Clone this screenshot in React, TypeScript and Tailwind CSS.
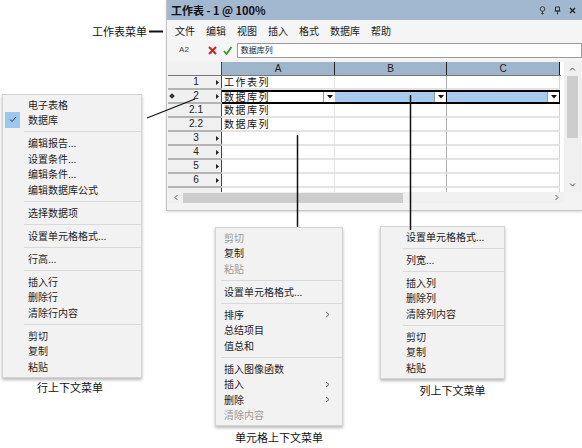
import React from "react";

type Item = { t: string; d?: boolean; sub?: boolean; checked?: boolean } | "sep";

const FONT = { fontFamily: '"Noto Sans CJK SC", "Noto Sans", sans-serif' };
const LAT = { fontFamily: '"Liberation Sans", "Noto Sans CJK SC", sans-serif' };

function Menu({
  items,
  textPad,
  sepPad,
  className,
}: {
  items: Item[];
  textPad: string;
  sepPad: string;
  className: string;
}) {
  return (
    <div
      className={`absolute bg-[#f2f2f2] border border-[#d4d4d4] shadow-[0_2px_3px_rgba(0,0,0,0.28)] py-[2px] ${className}`}
      style={FONT}
    >
      {items.map((it, i) =>
        it === "sep" ? (
          <div key={i} className={`h-[7.5px] flex items-center ${sepPad}`}>
            <div className="h-px w-full bg-[#d9d9d9]" />
          </div>
        ) : (
          <div key={i} className={`relative h-[15.5px] flex items-center ${textPad} pr-[12px] text-[10px] leading-none ${it.d ? "text-[#9a9a9a]" : "text-[#1e1e1e]"}`}>
            {it.checked && (
              <div className="absolute left-[2px] top-[-1px] w-[15px] h-[16px] bg-[#99c9ef] flex items-center justify-center">
                <svg width="8" height="7" viewBox="0 0 8 7">
                  <path d="M1 3.5 L3 5.5 L7 1" stroke="#333" strokeWidth="1" fill="none" />
                </svg>
              </div>
            )}
            <span className="flex-1">{it.t}</span>
            {it.sub && (
              <svg width="5" height="7" viewBox="0 0 5 7">
                <path d="M1 1 L4 3.5 L1 6" stroke="#555" strokeWidth="0.9" fill="none" />
              </svg>
            )}
          </div>
        )
      )}
    </div>
  );
}

const leftItems: Item[] = [
  { t: "电子表格" },
  { t: "数据库", checked: true },
  "sep",
  { t: "编辑报告..." },
  { t: "设置条件..." },
  { t: "编辑条件..." },
  { t: "编辑数据库公式" },
  "sep",
  { t: "选择数据项" },
  "sep",
  { t: "设置单元格格式..." },
  "sep",
  { t: "行高..." },
  "sep",
  { t: "插入行" },
  { t: "删除行" },
  { t: "清除行内容" },
  "sep",
  { t: "剪切" },
  { t: "复制" },
  { t: "粘贴" },
];

const midItems: Item[] = [
  { t: "剪切", d: true },
  { t: "复制" },
  { t: "粘贴", d: true },
  "sep",
  { t: "设置单元格格式..." },
  "sep",
  { t: "排序", sub: true },
  { t: "总结项目" },
  { t: "值总和" },
  "sep",
  { t: "插入图像函数" },
  { t: "插入", sub: true },
  { t: "删除", sub: true },
  { t: "清除内容", d: true },
];

const rightItems: Item[] = [
  { t: "设置单元格格式..." },
  "sep",
  { t: "列宽..." },
  "sep",
  { t: "插入列" },
  { t: "删除列" },
  { t: "清除列内容" },
  "sep",
  { t: "剪切" },
  { t: "复制" },
  { t: "粘贴" },
];

function Arrow() {
  return (
    <svg width="3" height="5" viewBox="0 0 3 5">
      <path d="M0 0 L3 2.5 L0 5 Z" fill="#222" />
    </svg>
  );
}

function DropBox() {
  return (
    <div className="w-[12px] h-full bg-white border-l border-[#999] flex items-center justify-center">
      <svg width="6" height="4" viewBox="0 0 6 4">
        <path d="M0 0 L6 0 L3 3.5 Z" fill="#111" />
      </svg>
    </div>
  );
}

type Row = { h: string; arrow: boolean; a?: string; sel?: boolean; diamond?: boolean };
const rows: Row[] = [
  { h: "1", arrow: true, a: "工作表列" },
  { h: "2", arrow: true, a: "数据库列", sel: true, diamond: true },
  { h: "2.1", arrow: false, a: "数据库列" },
  { h: "2.2", arrow: false, a: "数据库列" },
  { h: "3", arrow: true },
  { h: "4", arrow: true },
  { h: "5", arrow: true },
  { h: "6", arrow: true },
];

function RowHeader({ r }: { r: Row }) {
  return (
    <div className="w-[54px] h-full flex items-center bg-[#f0f0f0] border-r border-[#444] text-[10px] text-[#222]" style={LAT}>
      <div className="w-[8px] flex items-center justify-center">
        {r.diamond && <div className="w-[4px] h-[4px] bg-[#333] rotate-45" />}
      </div>
      <div className="w-[40px] text-center leading-none">{r.h}</div>
      <div className="w-[5px] flex items-center">{r.arrow && <Arrow />}</div>
    </div>
  );
}

function Window() {
  return (
    <div className="absolute left-[166px] top-0 w-[416px] h-[211px] bg-[#f3f3f3] border-l border-b border-[#c4c4c4] shadow-[0_1px_2px_rgba(0,0,0,0.15)] flex flex-col">
      <div className="h-[20px] bg-[#a2b7d0] flex items-center justify-between pl-[4px] pr-[6px]">
        <span className="text-[11px] font-bold text-[#111]" style={FONT}>
          工作表 - 1 @ 100%
        </span>
        <div className="flex items-center gap-[8px]">
          <svg width="7" height="9" viewBox="0 0 7 9">
            <circle cx="3.5" cy="3" r="2.3" stroke="#333" strokeWidth="0.9" fill="none" />
            <path d="M3.5 5.3 V8.5 M2.2 7.5 H4.8" stroke="#333" strokeWidth="0.9" />
          </svg>
          <svg width="7" height="9" viewBox="0 0 7 9">
            <path d="M1.5 1 H5.5 V5 H1.5 Z M0.5 5 H6.5 M3.5 5 V8.5" stroke="#333" strokeWidth="1" fill="none" />
          </svg>
          <svg width="7" height="7" viewBox="0 0 7 7">
            <path d="M1 1 L6 6 M6 1 L1 6" stroke="#222" strokeWidth="1.4" />
          </svg>
        </div>
      </div>
      <div className="h-[20px] bg-[#f5f5f5] flex items-center gap-[11px] pl-[8px] text-[10px] text-[#1a1a1a]" style={FONT}>
        {["文件", "编辑", "视图", "插入", "格式", "数据库", "帮助"].map((m) => (
          <span key={m}>{m}</span>
        ))}
      </div>
      <div className="h-[20px] bg-[#f5f5f5] flex items-center">
        <div className="w-[34px] text-center text-[8px] text-[#444]" style={LAT}>
          A2
        </div>
        <div className="w-[7px]" />
        <svg width="9" height="9" viewBox="0 0 9 9">
          <path d="M1 1 L8 8 M8 1 L1 8" stroke="#d42020" strokeWidth="2" />
        </svg>
        <div className="w-[6px]" />
        <svg width="9" height="9" viewBox="0 0 9 9">
          <path d="M1 5 L3.5 8 L8.5 1" stroke="#2aa02a" strokeWidth="1.8" fill="none" />
        </svg>
        <div className="w-[5px]" />
        <div className="w-[346px] h-[15px] bg-white border border-[#9a9a9a] flex items-center pl-[3px] text-[8px] text-[#222]" style={FONT}>
          数据库列
        </div>
      </div>
      <div className="h-[2px]" />
      <div className="flex h-[130px] pl-[1px]">
        <div className="w-[393px] h-full overflow-hidden flex flex-col bg-white">
          <div className="h-[14px] flex shrink-0 border-b border-[#777]">
            <div className="w-[54px] h-full bg-[#f0f0f0] border-r border-[#444]" />
            {[
              ["A", "w-[113px]"],
              ["B", "w-[112px]"],
              ["C", "w-[113px]"],
            ].map(([c, w]) => (
              <div key={c} className={`${w} h-full bg-[#9fb5cc] border-r border-[#222] flex items-center justify-center text-[10px] text-[#222] leading-none`} style={LAT}>
                {c}
              </div>
            ))}
          </div>
          {rows.map((r) => (
            <div key={r.h} className="h-[14px] flex shrink-0">
              <div className="h-full border-b-2 border-[#b4b4b4]">
                <RowHeader r={r} />
              </div>
              {r.sel ? (
                <>
                  <div className="w-[113px] h-full flex border-y-2 border-black bg-white">
                    <div className="flex-1 flex items-center pl-[2px] text-[10px] tracking-[1.5px] text-[#111] leading-none" style={FONT}>
                      {r.a}
                    </div>
                    <DropBox />
                  </div>
                  <div className="w-[112px] h-full flex border-y-2 border-r border-black bg-[#a7cbef]">
                    <div className="flex-1" />
                    <DropBox />
                  </div>
                  <div className="w-[113px] h-full flex border-y-2 border-r border-black bg-[#a7cbef]">
                    <div className="flex-1" />
                    <DropBox />
                  </div>
                </>
              ) : (
                <>
                  <div className="w-[113px] h-full flex items-center border-b-2 border-r border-[#e4e4e4] pl-[2px] text-[10px] tracking-[1.5px] text-[#111] leading-none" style={FONT}>
                    {r.a}
                  </div>
                  <div className="w-[112px] h-full border-b-2 border-[#e4e4e4] border-r border-r-[#b0b0b0]" />
                  <div className="w-[113px] h-full border-b-2 border-[#e4e4e4] border-r border-r-[#d6d6d6]" />
                </>
              )}
            </div>
          ))}
          <div className="h-[4px] flex shrink-0">
            <div className="w-[54px] h-full bg-[#f0f0f0] border-r border-[#444]" />
            <div className="w-[113px] h-full border-r border-[#e4e4e4]" />
            <div className="w-[112px] h-full border-r border-[#b0b0b0]" />
            <div className="w-[113px] h-full border-r border-[#d6d6d6]" />
          </div>
        </div>
        <div className="w-[3px] bg-white" />
        <div className="w-[17px] h-full bg-[#f0f0f0] flex flex-col items-center">
          <div className="h-[14px] flex items-center">
            <svg width="7" height="4" viewBox="0 0 7 4">
              <path d="M1 3.5 L3.5 1 L6 3.5" stroke="#555" strokeWidth="1" fill="none" />
            </svg>
          </div>
          <div className="w-[11px] h-[62px] bg-[#cdcdcd]" />
          <div className="flex-1" />
          <div className="h-[14px] flex items-center">
            <svg width="7" height="4" viewBox="0 0 7 4">
              <path d="M1 0.5 L3.5 3 L6 0.5" stroke="#555" strokeWidth="1" fill="none" />
            </svg>
          </div>
        </div>
      </div>
      <div className="h-[11px] w-[396px] ml-[1px] bg-[#f0f0f0] flex items-center">
        <div className="w-[15px] flex items-center justify-center">
          <svg width="4" height="7" viewBox="0 0 4 7">
            <path d="M3.5 1 L1 3.5 L3.5 6" stroke="#555" strokeWidth="1" fill="none" />
          </svg>
        </div>
        <div className="w-[220px] h-[10px] bg-[#cdcdcd]" />
        <div className="flex-1" />
        <div className="w-[15px] flex items-center justify-center">
          <svg width="4" height="7" viewBox="0 0 4 7">
            <path d="M0.5 1 L3 3.5 L0.5 6" stroke="#555" strokeWidth="1" fill="none" />
          </svg>
        </div>
      </div>
      <div className="flex-1 bg-[#f3f3f3]" />
    </div>
  );
}

export default function App() {
  return (
    <div className="relative w-[582px] h-[448px] bg-white overflow-hidden" style={FONT}>
      <Window />

      <div className="absolute left-[92px] top-[24px] text-[11px] text-[#111] leading-[14px]">工作表菜单</div>

      <Menu items={leftItems} textPad="pl-[25px]" sepPad="pl-[21px]" className="left-[2px] top-[94px] w-[140px]" />
      <Menu items={midItems} textPad="pl-[8px]" sepPad="pl-[5px]" className="left-[215px] top-[227px] w-[128px]" />
      <Menu items={rightItems} textPad="pl-[25px]" sepPad="pl-[22px]" className="left-[380px] top-[226px] w-[125px]" />

      <div className="absolute left-[0px] w-[140px] top-[380px] text-center text-[11px] text-[#111] leading-[14px]">行上下文菜单</div>
      <div className="absolute left-[215px] w-[128px] top-[430px] text-center text-[11px] text-[#111] leading-[14px]">单元格上下文菜单</div>
      <div className="absolute left-[390px] w-[125px] top-[383px] text-center text-[11px] text-[#111] leading-[14px]">列上下文菜单</div>

      <svg className="absolute left-0 top-0 pointer-events-none" width="582" height="448">
        <line x1="149" y1="31.5" x2="163" y2="31.5" stroke="#111" strokeWidth="2" />
        <line x1="147" y1="118" x2="195" y2="99" stroke="#111" strokeWidth="1.3" />
        <line x1="297.5" y1="135" x2="297.5" y2="227" stroke="#111" strokeWidth="1.5" />
        <line x1="410.5" y1="95" x2="410.5" y2="230" stroke="#111" strokeWidth="1.5" />
      </svg>
    </div>
  );
}
